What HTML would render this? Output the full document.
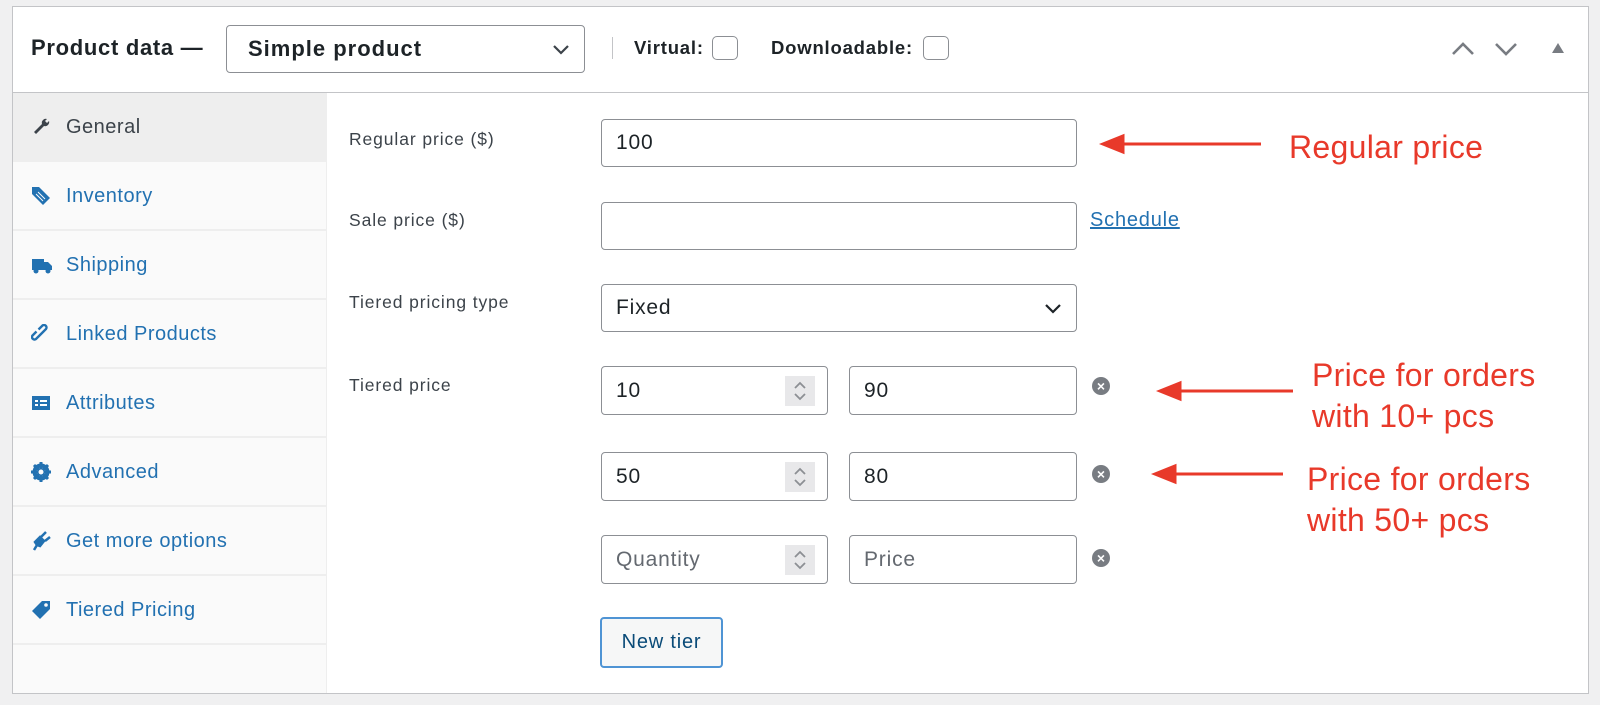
<!DOCTYPE html>
<html><head><meta charset="utf-8"><style>
*{box-sizing:border-box;margin:0;padding:0}
body{width:1600px;height:705px;background:#f0f0f1;font-family:"Liberation Sans",Arial,sans-serif;position:relative;overflow:hidden;color:#1d2327}
.a{position:absolute}
.panel{left:12px;top:6px;width:1577px;height:688px;background:#fff;border:1px solid #c3c4c7}
.hdr{left:12px;top:92px;width:1577px;height:1px;background:#c3c4c7}
.side{left:13px;top:93px;width:314px;height:600px;background:#fafafa;border-right:1px solid #eee}
.row{position:absolute;left:0;width:314px;height:69px;border-bottom:2px solid #eee;font-size:20px;letter-spacing:0.5px;color:#2271b1}
.row span{position:absolute;left:53px;top:23px}
.row svg{position:absolute;left:18px;top:24px}
.lbl{font-size:17.5px;letter-spacing:0.9px;color:#3c434a;left:349px}
.inp{border:1px solid #8c8f94;border-radius:4px;background:#fff;font-size:21px;letter-spacing:0.8px;color:#1d2327;padding-left:14px;display:flex;align-items:center}
.ph{color:#646970}
.spin{position:absolute;right:12px;top:9px;width:30px;height:30px;background:#e8e8ea}
.x{width:18px;height:18px;border-radius:50%;background:#787c82;color:#fff;font-size:14px;font-weight:bold;text-align:center;line-height:18px}
.red{color:#e8392a;font-size:32px;letter-spacing:0.3px;line-height:41px}
.cb{width:26px;height:24px;border:1px solid #8c8f94;border-radius:5px;background:#fff}
</style></head><body>
<div class="a panel"></div>
<div class="a hdr"></div>
<div class="a" style="left:31px;top:35px;font-size:22px;letter-spacing:0.7px;font-weight:bold">Product data —</div>
<div class="a inp" style="left:226px;top:25px;width:359px;height:48px;font-size:22px;letter-spacing:1px;font-weight:bold;padding-left:21px">Simple product
<svg class="a" style="right:14px;top:18px" width="18" height="12" viewBox="0 0 18 12"><path d="M2 2l7 7 7-7" fill="none" stroke="#3c434a" stroke-width="2.2"/></svg></div>
<div class="a" style="left:612px;top:37px;width:1px;height:22px;background:#c3c4c7"></div>
<div class="a" style="left:634px;top:37px;font-size:18.5px;letter-spacing:0.8px;font-weight:bold">Virtual:</div>
<div class="a cb" style="left:712px;top:36px"></div>
<div class="a" style="left:771px;top:37px;font-size:18.5px;letter-spacing:0.8px;font-weight:bold">Downloadable:</div>
<div class="a cb" style="left:923px;top:36px"></div>
<svg class="a" style="left:1451px;top:41px" width="24" height="16" viewBox="0 0 24 16"><path d="M2 13l10-10 10 10" fill="none" stroke="#787c82" stroke-width="2.6"/></svg>
<svg class="a" style="left:1494px;top:41px" width="24" height="16" viewBox="0 0 24 16"><path d="M2 3l10 10 10-10" fill="none" stroke="#787c82" stroke-width="2.6"/></svg>
<svg class="a" style="left:1551px;top:42px" width="14" height="12" viewBox="0 0 14 12"><path d="M7 1l6 10H1z" fill="#787c82"/></svg>

<div class="a side">
<div class="row" style="top:0;background:#eee;border-bottom:none"><svg width="20" height="20" viewBox="0 0 20 20"><path d="M16 2a4 4 0 0 0-5 5L3 15l2 2 8-8a4 4 0 0 0 5-5l-2 2-2-2z" fill="#3c434a"/></svg><span style="color:#3c434a">General</span></div>
<div class="row" style="top:69px"><svg width="20" height="20" viewBox="0 0 20 20"><path d="M8 1l11 11-7 7L1 8V1z" fill="#2271b1"/><path d="M7 6l7 7M5 8l7 7" stroke="#fafafa" stroke-width="1"/></svg><span>Inventory</span></div>
<div class="row" style="top:138px"><svg width="22" height="20" viewBox="0 0 22 20"><path d="M1 4h12v11H1zM13 7h4l4 4v4h-8z" fill="#2271b1"/><circle cx="5" cy="16" r="2.5" fill="#2271b1"/><circle cx="17" cy="16" r="2.5" fill="#2271b1"/></svg><span>Shipping</span></div>
<div class="row" style="top:207px"><svg width="20" height="20" viewBox="0 0 20 20"><path d="M9 11l-4 4a2.5 2.5 0 0 1-3.5-3.5l4-4M11 9l4-4a2.5 2.5 0 0 0-3.5-3.5l-4 4M7 13l6-6" fill="none" stroke="#2271b1" stroke-width="2.4"/></svg><span>Linked Products</span></div>
<div class="row" style="top:276px"><svg width="20" height="20" viewBox="0 0 20 20"><path d="M1 3h18v14H1z" fill="#2271b1"/><path d="M4 8h3M9 8h7M4 12h3M9 12h7" stroke="#fff" stroke-width="2"/></svg><span>Attributes</span></div>
<div class="row" style="top:345px"><svg width="20" height="20" viewBox="0 0 20 20"><circle cx="10" cy="10" r="6.5" fill="none" stroke="#2271b1" stroke-width="4"/><path d="M10 0v20M0 10h20M3 3l14 14M17 3L3 17" stroke="#2271b1" stroke-width="3"/><circle cx="10" cy="10" r="2.5" fill="#fafafa"/></svg><span>Advanced</span></div>
<div class="row" style="top:414px"><svg width="20" height="20" viewBox="0 0 20 20"><path d="M3 19l3-5-2-3 5-5 4 4-4 5-3-1zM10 6l5-5M14 10l5-4" stroke="#2271b1" stroke-width="2.5" fill="#2271b1"/></svg><span>Get more options</span></div>
<div class="row" style="top:483px"><svg width="20" height="20" viewBox="0 0 20 20"><path d="M11 1h8v8L9 19 1 11z" fill="#2271b1"/><circle cx="15" cy="5" r="1.8" fill="#fafafa"/></svg><span>Tiered Pricing</span></div>
</div>

<div class="a lbl" style="top:129px">Regular price ($)</div>
<div class="a lbl" style="top:210px">Sale price ($)</div>
<div class="a lbl" style="top:292px">Tiered pricing type</div>
<div class="a lbl" style="top:375px">Tiered price</div>

<div class="a inp" style="left:601px;top:119px;width:476px;height:48px">100</div>
<div class="a inp" style="left:601px;top:202px;width:476px;height:48px"></div>
<div class="a" style="left:1090px;top:209px;font-size:20px;letter-spacing:0.8px;color:#2271b1;text-decoration:underline">Schedule</div>
<div class="a inp" style="left:601px;top:284px;width:476px;height:48px">Fixed
<svg class="a" style="right:14px;top:18px" width="18" height="12" viewBox="0 0 18 12"><path d="M2 2l7 7 7-7" fill="none" stroke="#1d2327" stroke-width="2.2"/></svg></div>

<div class="a inp" style="left:601px;top:366px;width:227px;height:49px">10<div class="spin"><svg width="30" height="30" viewBox="0 0 30 30"><path d="M10 12l5-5 5 5M10 18l5 5 5-5" fill="none" stroke="#8c8f94" stroke-width="1.8"/></svg></div></div>
<div class="a inp" style="left:849px;top:366px;width:228px;height:49px">90</div>
<div class="a x" style="left:1092px;top:377px">×</div>
<div class="a inp" style="left:601px;top:452px;width:227px;height:49px">50<div class="spin"><svg width="30" height="30" viewBox="0 0 30 30"><path d="M10 12l5-5 5 5M10 18l5 5 5-5" fill="none" stroke="#8c8f94" stroke-width="1.8"/></svg></div></div>
<div class="a inp" style="left:849px;top:452px;width:228px;height:49px">80</div>
<div class="a x" style="left:1092px;top:465px">×</div>
<div class="a inp" style="left:601px;top:535px;width:227px;height:49px"><span class="ph">Quantity</span><div class="spin"><svg width="30" height="30" viewBox="0 0 30 30"><path d="M10 12l5-5 5 5M10 18l5 5 5-5" fill="none" stroke="#8c8f94" stroke-width="1.8"/></svg></div></div>
<div class="a inp" style="left:849px;top:535px;width:228px;height:49px"><span class="ph">Price</span></div>
<div class="a x" style="left:1092px;top:549px">×</div>

<div class="a" style="left:600px;top:617px;width:123px;height:51px;border:2px solid #4f94d4;border-radius:4px;background:#f6f7f7;font-size:20px;letter-spacing:0.8px;color:#0a4b78;display:flex;align-items:center;justify-content:center">New tier</div>

<svg class="a" style="left:0;top:0" width="1600" height="705">
<g stroke="#e8392a" stroke-width="3" fill="#e8392a">
<line x1="1120" y1="144" x2="1261" y2="144"/><path d="M1103 144l20-8v16z"/>
<line x1="1176" y1="391" x2="1293" y2="391"/><path d="M1160 391l20-8v16z"/>
<line x1="1171" y1="474" x2="1283" y2="474"/><path d="M1155 474l20-8v16z"/>
</g></svg>
<div class="a red" style="left:1289px;top:127px">Regular price</div>
<div class="a red" style="left:1312px;top:355px">Price for orders<br>with 10+ pcs</div>
<div class="a red" style="left:1307px;top:459px">Price for orders<br>with 50+ pcs</div>
</body></html>
